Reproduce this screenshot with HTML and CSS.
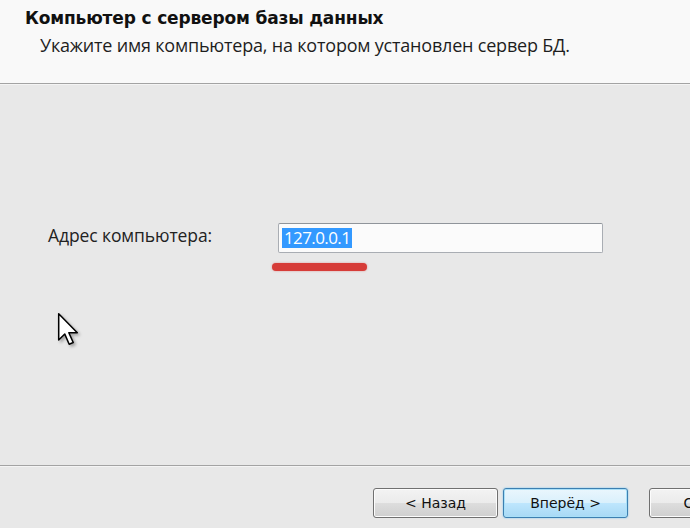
FILE: index.html
```html
<!DOCTYPE html>
<html lang="ru">
  <head>
    <meta charset="UTF-8" />
    <meta name="viewport" content="width=device-width, initial-scale=1.0" />
    <title>Компьютер с сервером базы данных</title>
    <link rel="stylesheet" href="styles.css">
  </head>
  <body>
    <div id="wizard">
      <div class="header">
        <h1>Компьютер с сервером базы данных</h1>
        <p>Укажите имя компьютера, на котором установлен сервер БД.</p>
      </div>

      <div class="content">
        <div class="field">
          <label>Адрес компьютера:</label>
          <div class="box">
            <div class="textbox"><span class="selected">127.0.0.1</span></div>
            <div class="mark"></div>
          </div>
        </div>

        <svg class="pointer" width="22" height="34" viewBox="0 0 13 20">
          <path d="M1 1 L1 16.5 L4.6 13 L7.2 19 L9.6 18 L7 12.2 L12 12.2 Z"
                fill="#fff" stroke="#000" stroke-width="0.9" stroke-linejoin="round" />
        </svg>
      </div>

      <div class="footer">
        <button class="btn">&lt; Назад</button>
        <button class="btn default">Вперёд &gt;</button>
        <button class="btn cancel">Отмена</button>
      </div>
    </div>
  </body>
</html>
```

FILE: styles.css
```css
* {
  margin: 0;
  padding: 0;
  box-sizing: border-box;
}

body {
  width: 690px;
  height: 528px;
  overflow: hidden;
  font-family: 'Open Sans', 'DejaVu Sans', sans-serif;
  color: #1e1e1e;
  background-color: #e8e8e8;
}

#wizard {
  display: flex;
  flex-direction: column;
  height: 528px;
}

.header {
  height: 84px;
  padding: 7px 0 0 25px;
  background-color: #f9f9f9;
  border-bottom: 1px solid #a3a3a3;
  box-shadow: 0 1px 0 #f4f4f4;
}

.header h1 {
  font-family: 'DejaVu Sans', sans-serif;
  font-size: 17px;
  font-weight: 700;
  letter-spacing: -0.15px;
  line-height: 23px;
  color: #111;
}

.header p {
  margin-top: 3px;
  padding-left: 15px;
  font-size: 18px;
  line-height: 24px;
  letter-spacing: -0.2px;
}

.content {
  position: relative;
  flex: 1;
  padding: 139px 0 0 48px;
}

.field {
  display: flex;
  align-items: flex-start;
}

.field label {
  width: 230px;
  padding-top: 1px;
  font-size: 17.5px;
  line-height: 22px;
  letter-spacing: -0.1px;
  color: #222;
}

.textbox {
  width: 325px;
  height: 30px;
  padding: 4px 3px;
  background-color: #fbfbfb;
  border: 1px solid #a9adb3;
  border-top-color: #8f949a;
  border-radius: 2px;
  font-size: 17px;
  line-height: 20px;
}

.selected {
  display: inline-block;
  padding: 0 2px;
  background-color: #3399ff;
  color: #fff;
  letter-spacing: -0.6px;
}

.mark {
  width: 95px;
  height: 8px;
  margin: 10px 0 0 -6px;
  border-radius: 4px;
  background-color: #d63c38;
  box-shadow: 0 0 2px rgba(214, 60, 56, 0.5);
}

.pointer {
  position: absolute;
  left: 57px;
  top: 228px;
  filter: drop-shadow(2px 2px 1.5px rgba(0, 0, 0, 0.3));
}

.footer {
  display: flex;
  height: 63px;
  padding: 22px 0 0 373px;
  border-top: 1px solid #a3a3a3;
  box-shadow: inset 0 1px 0 #f4f4f4;
  overflow: hidden;
  white-space: nowrap;
}

.btn {
  flex: none;
  width: 125px;
  height: 30px;
  margin-right: 5px;
  font-family: 'DejaVu Sans', sans-serif;
  font-size: 14px;
  color: #111;
  border: 1px solid #707070;
  border-radius: 3px;
  background: linear-gradient(#f3f3f3, #ebebeb 50%, #dddddd 51%, #cfcfcf);
  box-shadow: inset 0 0 0 1px #fcfcfc;
}

.btn.default {
  border-color: #3c7fb1;
  background: linear-gradient(#eaf6fd, #d9f0fc 50%, #bee6fd 51%, #a7d9f5);
  box-shadow: inset 0 0 0 1px #a9e0f8, 0 0 2px #6fc3ee;
}

.btn.cancel {
  margin-left: 16px;
}
```
